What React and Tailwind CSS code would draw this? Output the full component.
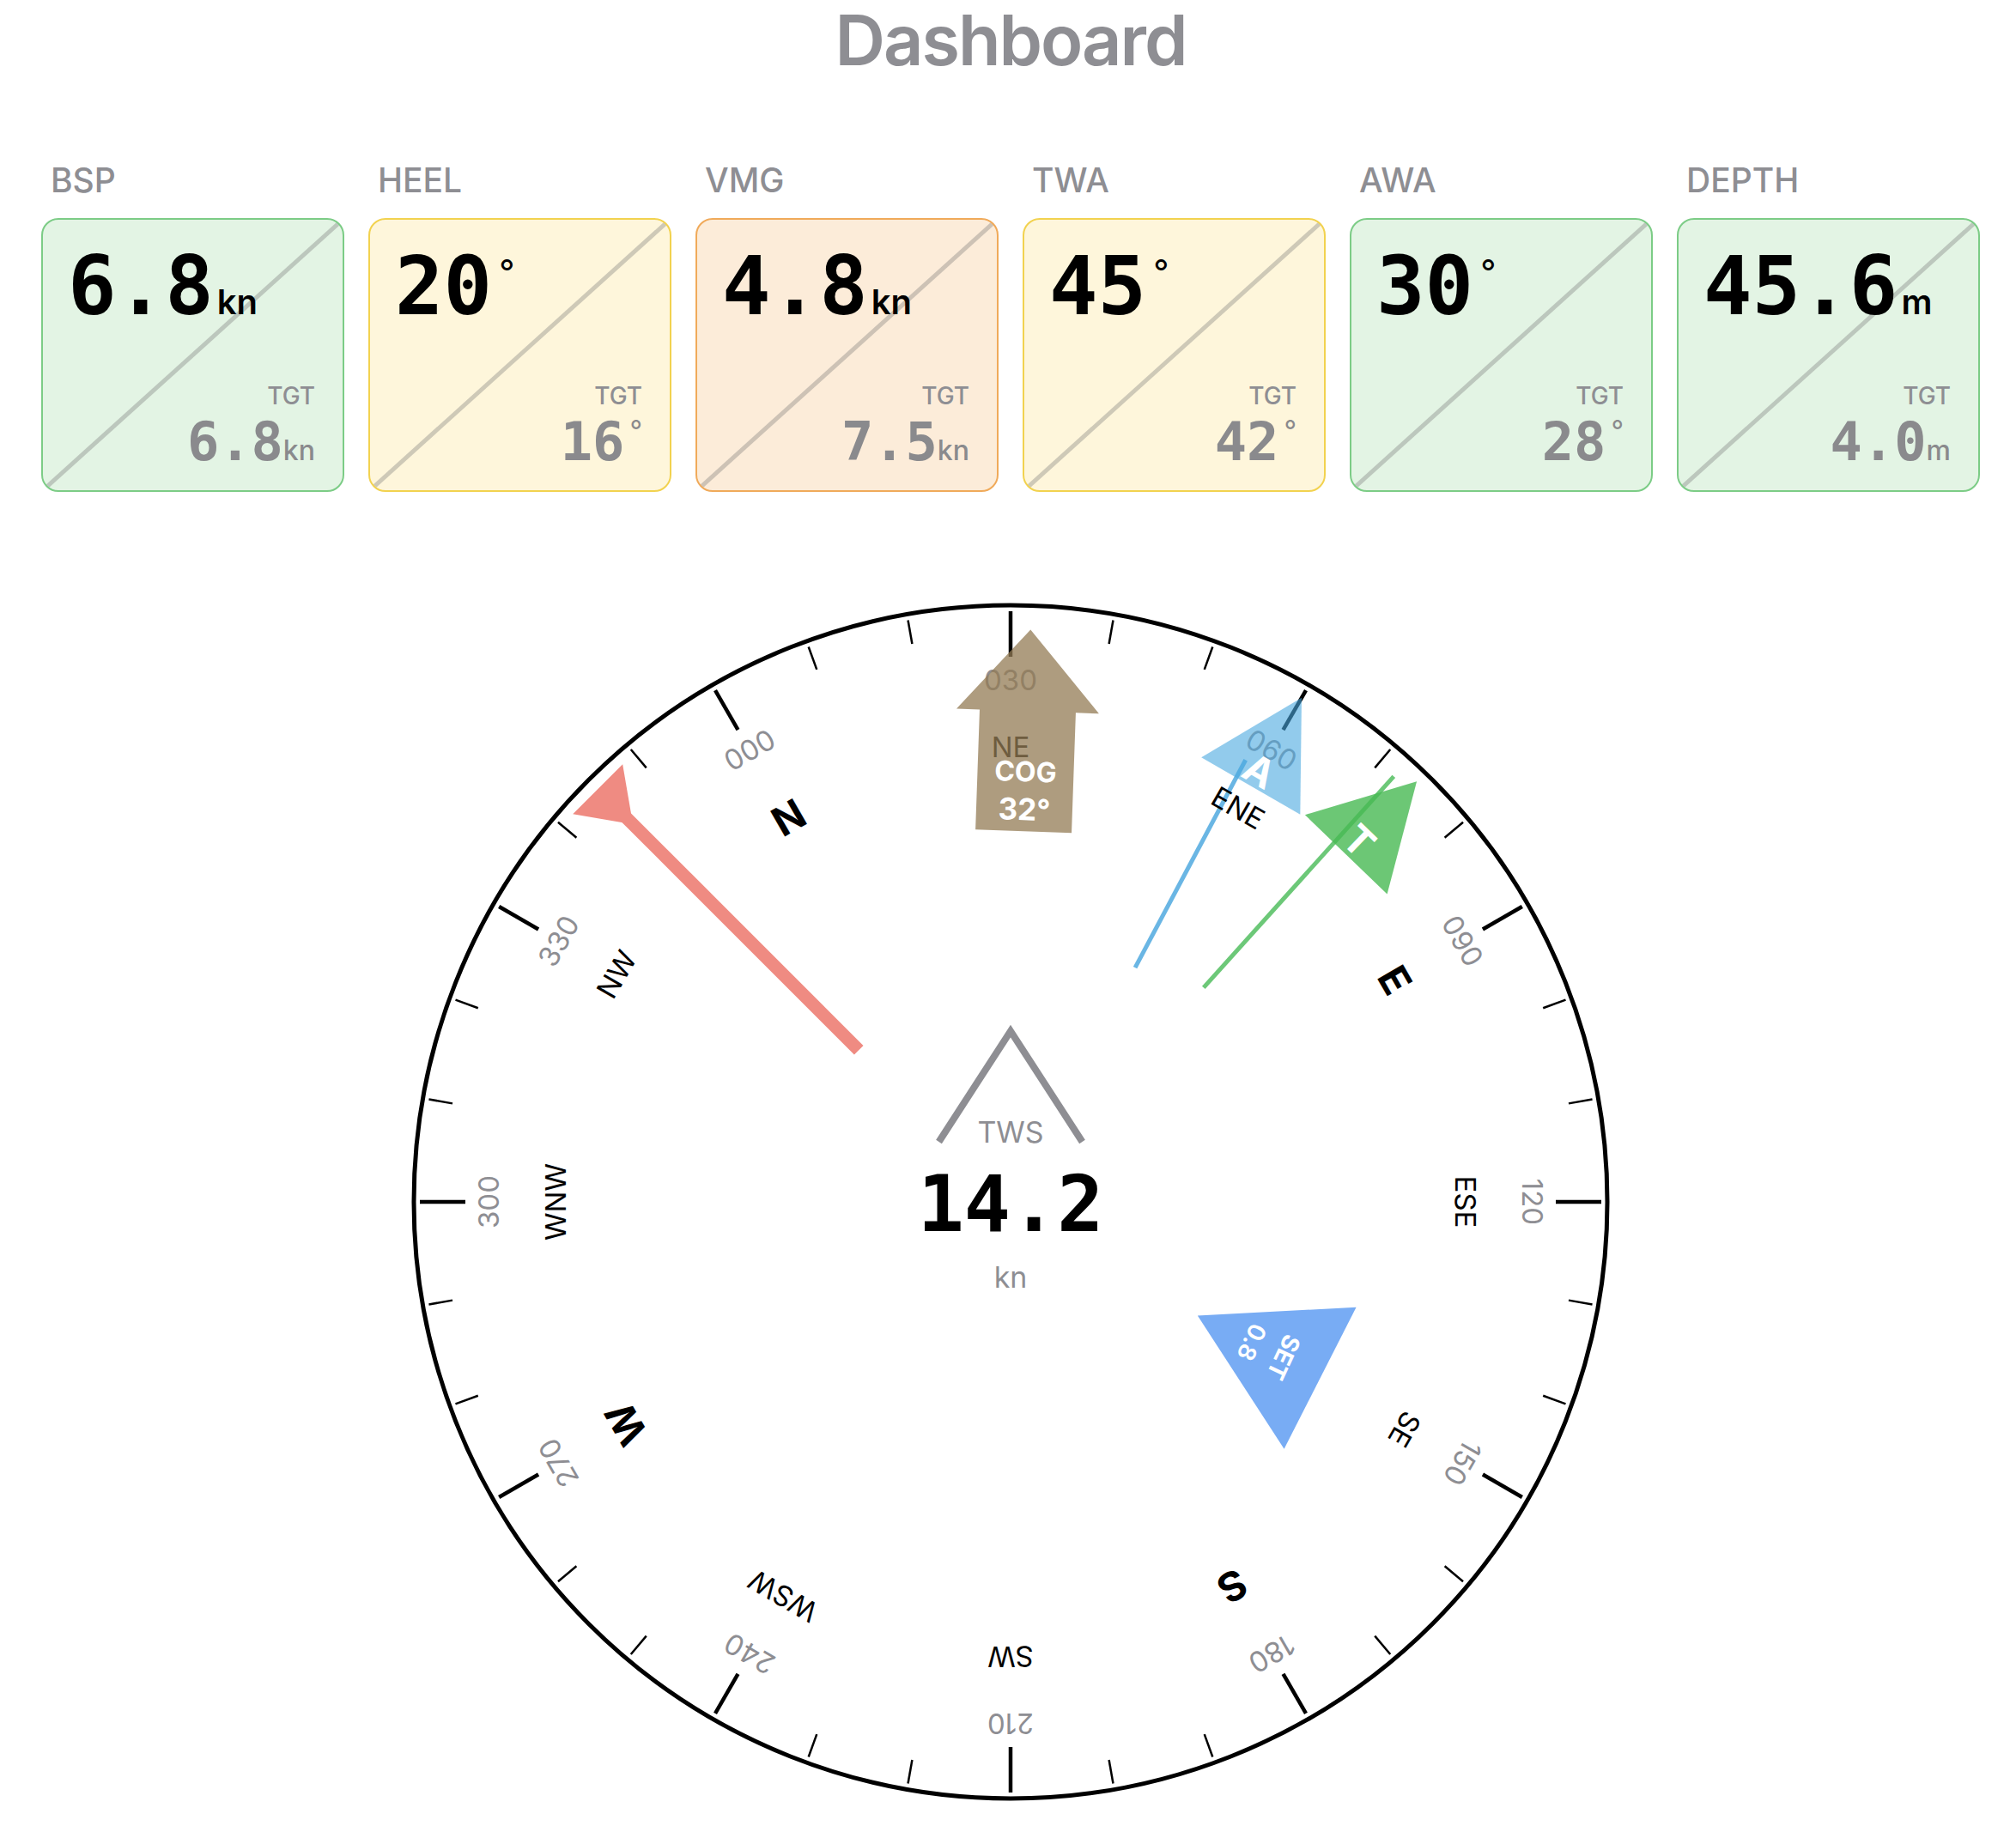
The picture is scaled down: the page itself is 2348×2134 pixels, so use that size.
import React from 'react';

const cards = [
  { label: 'BSP', value: '6.8', unit: 'kn', tgt: '6.8', tone: 'green' },
  { label: 'HEEL', value: '20', unit: '°', tgt: '16', tone: 'yellow' },
  { label: 'VMG', value: '4.8', unit: 'kn', tgt: '7.5', tone: 'orange' },
  { label: 'TWA', value: '45', unit: '°', tgt: '42', tone: 'yellow' },
  { label: 'AWA', value: '30', unit: '°', tgt: '28', tone: 'green' },
  { label: 'DEPTH', value: '45.6', unit: 'm', tgt: '4.0', tone: 'green' },
];

const tones = {
  green: 'bg-[#e3f4e4] border-[#7ccc86]',
  yellow: 'bg-[#fef6db] border-[#f2d24f]',
  orange: 'bg-[#fcecd9] border-[#f0aa5a]',
};

const mono = "font-['DejaVu_Sans_Mono',monospace] slashed-zero";

// heading up: card degree d sits at screen angle d - 30
const HDG = 30;
const polar = (deg, r) => {
  const a = (deg * Math.PI) / 180;
  return [r * Math.sin(a), -r * Math.cos(a)];
};

const points = ['N', 'NE', 'ENE', 'E', 'ESE', 'SE', 'S', 'SW', 'WSW', 'W', 'WNW', 'NW'];

const Unit = ({ unit, big }) => {
  if (unit === '°') {
    return big ? (
      <span className="self-start mt-[10px] ml-[8px] text-[40px] leading-none">°</span>
    ) : (
      <span className="self-start mt-[2px] ml-[6px] text-[32px] leading-none">°</span>
    );
  }
  return big ? (
    <span className="ml-[4px] text-[40px] leading-none font-semibold">{unit}</span>
  ) : (
    <span className="text-[32px] leading-none font-medium">{unit}</span>
  );
};

const MetricCard = ({ card }) => (
  <div className="flex flex-col">
    <div className="pl-[11px] text-[39px] leading-none font-medium text-[#8e8e93]">{card.label}</div>
    <div
      className={`relative mt-[25px] h-[319px] overflow-hidden rounded-[20px] border-2 ${tones[card.tone]}`}
    >
      <svg className="absolute inset-0 h-full w-full" preserveAspectRatio="none">
        <line x1="0" y1="100%" x2="100%" y2="0" stroke="rgba(110,110,110,0.33)" strokeWidth="5" />
      </svg>
      <div className="relative flex h-full flex-col justify-between pt-[31px] pb-[25px] pl-[29px] pr-[32px]">
        <div className="flex items-baseline text-black">
          <span className={`${mono} text-[94px] leading-none font-bold`}>{card.value}</span>
          <Unit unit={card.unit} big />
        </div>
        <div className="flex flex-col items-end">
          <div className="mb-[9px] text-[28px] leading-none font-medium text-[#8e8e93]">TGT</div>
          <div className="flex items-baseline text-[#8a8a8d]">
            <span className={`${mono} text-[62px] leading-none font-bold`}>{card.tgt}</span>
            <Unit unit={card.unit} />
          </div>
        </div>
      </div>
    </div>
  </div>
);

const Compass = () => {
  const ticks = Array.from({ length: 36 }, (_, i) => {
    const d = i * 10;
    const major = d % 30 === 0;
    const [x1, y1] = polar(d - HDG, major ? 635 : 660);
    const [x2, y2] = polar(d - HDG, 688);
    return (
      <line key={d} x1={x1} y1={y1} x2={x2} y2={y2} stroke="#000" strokeWidth={major ? 4.5 : 2.5} />
    );
  });

  const numbers = Array.from({ length: 12 }, (_, i) => {
    const d = i * 30;
    return (
      <text
        key={d}
        transform={`rotate(${d - HDG})`}
        x="0"
        y="-596"
        textAnchor="middle"
        fontSize="33"
        fill="#8e8e93"
      >
        {String(d).padStart(3, '0')}
      </text>
    );
  });

  const labels = points.map((p, i) => {
    const main = p.length === 1;
    return (
      <text
        key={p}
        transform={`rotate(${i * 30 - HDG})`}
        x="0"
        y={main ? -500 : -518}
        textAnchor="middle"
        fontSize={main ? 47 : 33}
        fontWeight={main ? 700 : 400}
        fill="#000"
      >
        {p}
      </text>
    );
  });

  return (
    <svg width="1400" height="1400" viewBox="-700 -700 1400 1400" className="font-['Inter',sans-serif]">
      <circle cx="0" cy="0" r="695" fill="none" stroke="#000" strokeWidth="5" />
      {ticks}

      {/* wind lines */}
      <g transform="rotate(-45)">
        <line x1="0" y1="-250" x2="0" y2="-634" stroke="#ef8b82" strokeWidth="15" />
        <polygon points="-41,-680 41,-680 0,-622" fill="#ef8b82" />
      </g>
      <line transform="rotate(28)" x1="0" y1="-309" x2="0" y2="-583" stroke="#6ab6e4" strokeWidth="5" />
      <line transform="rotate(42)" x1="0" y1="-336" x2="0" y2="-667" stroke="#6cc878" strokeWidth="5" />

      {numbers}
      {labels}

      {/* apparent wind */}
      <g transform="rotate(30)">
        <polygon points="0,-678 66.5,-559.5 -66.5,-559.5" fill="#49a8df" opacity="0.6" />
        <text x="0" y="-563" textAnchor="middle" fontSize="46" fontWeight="700" fill="#fff">A</text>
      </g>

      {/* true wind */}
      <g transform="rotate(44)">
        <polygon points="0,-681 66.5,-562.5 -66.5,-562.5" fill="#47b952" opacity="0.8" />
        <text x="0" y="-568" textAnchor="middle" fontSize="46" fontWeight="700" fill="#fff">T</text>
      </g>

      {/* course over ground */}
      <g transform="rotate(2)">
        <polygon
          points="0,-667 83,-572 56,-572 56,-432 -56,-432 -56,-572 -83,-572"
          fill="#937b54"
          opacity="0.75"
        />
        <text x="0" y="-490" textAnchor="middle" fontSize="32" fontWeight="700" fill="#fff">COG</text>
        <text x="0" y="-445" textAnchor="middle" fontSize="35" fontWeight="700" fill="#fff">32°</text>
      </g>

      {/* current set */}
      <g transform="translate(313 181) rotate(177)">
        <polygon points="0,-107 92.5,53.5 -92.5,53.5" fill="#78acf4" />
      </g>
      <g transform="translate(299 172) rotate(115)">
        <text x="0" y="-11" textAnchor="middle" fontSize="28" fontWeight="700" fill="#fff">SET</text>
        <text x="0" y="30" textAnchor="middle" fontSize="28" fontWeight="600" fill="#fff">0.8</text>
      </g>

      {/* true wind speed */}
      <polyline
        points="-83.5,-70 0,-199 83.5,-70"
        fill="none"
        stroke="#8e8e93"
        strokeWidth="8"
        strokeLinejoin="miter"
      />
      <text x="0" y="-69" textAnchor="middle" fontSize="34" fill="#8e8e93">TWS</text>
      <text
        x="0"
        y="34"
        textAnchor="middle"
        fontSize="90"
        fontWeight="700"
        fill="#000"
        className={mono}
      >
        14.2
      </text>
      <text x="0" y="100" textAnchor="middle" fontSize="34" fill="#8e8e93">kn</text>
    </svg>
  );
};

export default function App() {
  return (
    <div className="min-h-screen bg-white pl-[48px] pr-[42px] font-['Inter',sans-serif]">
      <h1 className="pt-[7px] text-center text-[81px] leading-none font-semibold tracking-tight text-[#8e8e93]">
        Dashboard
      </h1>

      <div className="mt-[102px] grid grid-cols-6 gap-[28px]">
        {cards.map(card => (
          <MetricCard key={card.label} card={card} />
        ))}
      </div>

      <div className="mt-[127px] flex justify-center">
        <Compass />
      </div>
    </div>
  );
}
